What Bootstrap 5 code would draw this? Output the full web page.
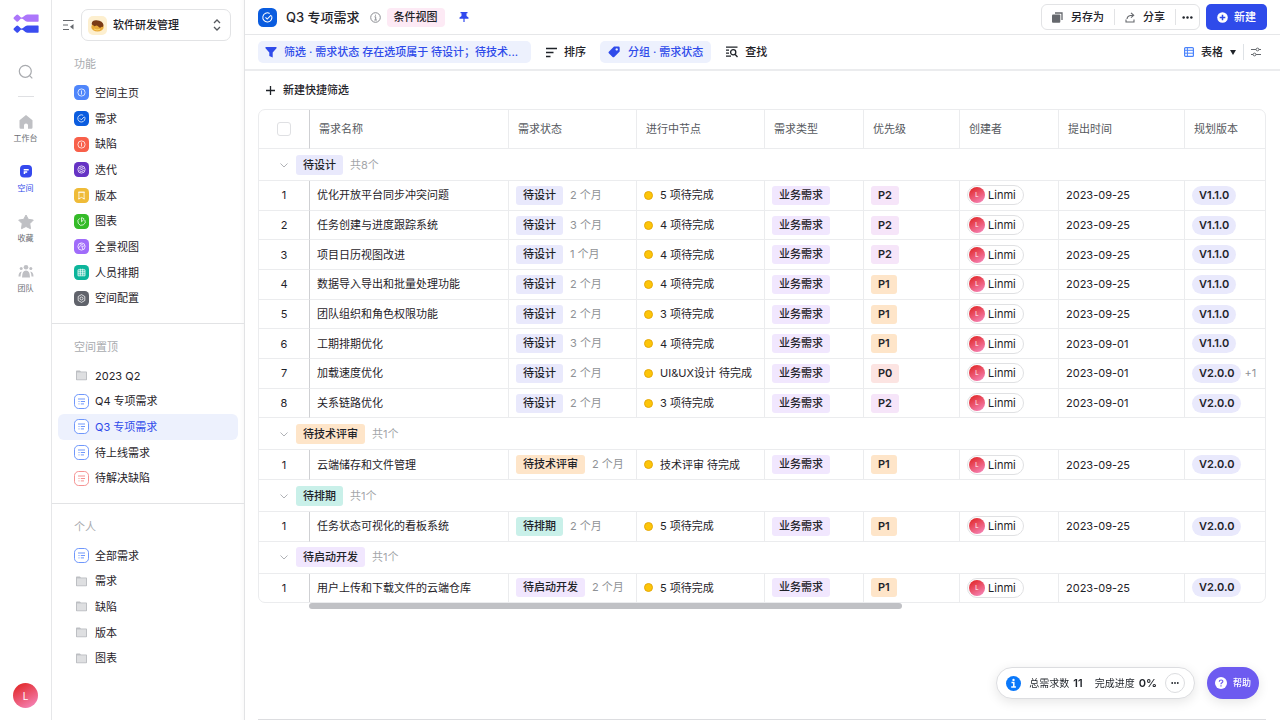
<!DOCTYPE html>
<html lang="zh-CN">
<head>
<meta charset="utf-8">
<meta name="viewport" content="width=device-width, initial-scale=1">
<title>Q3 专项需求</title>
<link href="https://cdn.jsdelivr.net/npm/bootstrap@5.3.0/dist/css/bootstrap.min.css" rel="stylesheet">
<style>
  :root { --ink:#1f2329; --muted:#8f9296; --line:#ebecee; --brand:#2f4bea; --brand-soft:#edf1fd; }
  body { font-family:Inter,"Noto Sans CJK SC",sans-serif; font-size:11px; line-height:16px; color:var(--ink); background:#fff; }
  a { text-decoration:none; color:inherit; }
  svg { display:block; flex:none; }
  button, select { font:inherit; color:inherit; background:none; border:0; padding:0; }
  select { appearance:none; outline:0; font-weight:500; }

  .rail { width:52px; border-right:1px solid #e6e7e9; padding:14px 0 12px; }
  .rail a { font-size:8px; line-height:12px; color:#6b6e73; height:50px; gap:2px; }
  .rail a.on { color:var(--brand); }
  .rail hr { width:16px; margin:16px 0 17px; border-color:#dfe0e3; opacity:1; }
  .rail-search { margin-top:30px; }
  .face { border-radius:50%; color:#fff; background:linear-gradient(150deg,#e32f34 15%,#f582b4 90%); display:flex; align-items:center; justify-content:center; flex:none; }
  .face-lg { width:25px; height:25px; font-size:10px; }
  .face-sm { width:16px; height:16px; font-size:6px; }

  .side { width:193px; border-right:1px solid #e2e3e5; box-shadow:inset -4px 0 5px -4px #0000000d; }
  .side-top { padding:9px 13px 0 10px; gap:6px; }
  .space-pick { height:32px; border:1px solid #e2e3e5; border-radius:7px; padding:0 9px 0 6px; gap:6px; }
  .side-part { padding:15px 6px 12px; border-bottom:1px solid #e2e3e5; }
  .side-part:last-child { border:0; }
  .side-part h2 { font-size:11px; line-height:16px; font-weight:400; color:#a9abaf; margin:0 0 8px; padding-left:16px; }
  .side-list a { flex:1 1 0; display:flex; align-items:center; gap:6px; padding-left:16px; border-radius:6px; }
  .side-list a.on { background:var(--brand-soft); color:var(--brand); }
  .list-nine { height:231px; }
  .list-five { height:128px; }

  .topbar { height:35px; border-bottom:1px solid #e6e7e9; padding:0 13px; }
  .topbar h1 { font-size:13px; line-height:20px; font-weight:500; margin:0 10px 0 9px; }
  .kind { background:#fdeaf5; border-radius:4px; padding:1px 7px 2px; font-weight:500; margin:0 14px 0 6px; }
  .acts { height:26px; border:1px solid #e2e3e5; border-radius:6px; font-weight:500; margin-right:6px; }
  .acts button { padding:0 10px; }
  .acts button:last-child { padding:0 6px; }
  .acts button + button { border-left:1px solid #e2e3e5; height:16px; }
  .btn-new { height:26px; border-radius:5px; background:var(--brand); color:#fff; font-weight:500; padding:0 11px; gap:6px; }
  .tools { height:36px; border-bottom:2px solid #ebecee; padding:0 13px; font-weight:500; }
  .tools button { gap:7px; }
  .tool-plain { margin:0 14px 0 15px; }
  .chip { height:22px; border-radius:5px; background:var(--brand-soft); color:var(--brand); padding:0 7px; }
  .tools .chip-group { gap:8px; padding:0 8px; }
  .chip-wide { width:273px; }
  .view-pick { gap:7px; padding-right:7px; }
  .view-set { padding:0 6px 0 7px; }

  .board { margin:0 14px 0 13px; }
  .quick { height:38px; padding:0 8px; font-weight:500; }
  .frame { border:1px solid var(--line); border-radius:7px; overflow:hidden; }
  .grid-table { width:100%; height:492px; table-layout:fixed; border-collapse:separate; border-spacing:0; }
  .grid-table th, .grid-table td { padding:0 7px; border-bottom:1px solid var(--line); border-left:1px solid var(--line); white-space:nowrap; vertical-align:middle; }
  .grid-table th { font-weight:400; color:#56595e; padding-left:9px; height:39px; }
  .grid-table tr > :first-child { border-left:0; text-align:center; padding:0; }
  .grid-table tr > :nth-child(2) { border-left-color:#cfd0d3; }
  .grid-table tr.group-row > td { height:32px; text-align:left; padding-left:20px; }
  .group-row .tag-line { gap:7px; }
  .grid-table tbody tr:last-child td { border-bottom:0; }
  .grid-table input { appearance:none; width:14px; height:14px; border:1px solid #dfe0e3; border-radius:3px; margin:0; display:block; }
  .tag { display:inline-block; border-radius:3px; padding:1px 7px 2px; font-weight:500; line-height:16px; }
  .group-row .tag { padding:2px 7px; }
  .tag-design { background:#e9e9fc; } .tag-review { background:#fee5c9; } .tag-plan { background:#c9f0e9; }
  .tag-type, .tag-start { background:#f1e7fe; }
  .tag-P2 { background:#f6e5f9; } .tag-P1 { background:#fee5c9; } .tag-P0 { background:#fce4e2; }
  .tag-level { font-weight:600; }
  .tag-ver { background:#e9e9fc; border-radius:10px; font-weight:600; }
  .age { color:var(--muted); margin-left:7px; }
  .plus { color:var(--muted); margin-left:3px; }
  .count { color:#a4a6aa; }
  .node { gap:7px; }
  .dot { width:9px; height:9px; border-radius:50%; background:#fdc508; border:1px solid #e5a90b; flex:none; }
  .person { display:inline-flex; align-items:center; gap:3px; height:20px; border:1px solid #e0e1e3; border-radius:10px; padding:0 7px 0 1px; }
  .hbar { margin-left:51px; }
  .hbar div { width:62%; height:6px; border-radius:3px; background:#c0c1c5; }

  .float-bar { position:fixed; right:21px; bottom:21px; gap:12px; }
  .stats { height:32px; border:1px solid #dcdde0; border-radius:16px; background:#fff; box-shadow:0 3px 12px #0000001a; padding:0 9px; font-size:10px; }
  .stats b { font-size:11px; font-weight:600; }
  .more { width:20px; height:20px; border:1px solid #dcdde0; border-radius:50%; }
  .help { height:32px; border-radius:16px; background:#6d5bf0; color:#fff; font-size:9px; font-weight:500; padding:0 8px; gap:6px; box-shadow:0 3px 12px #0000001a; }
  .foot-line { margin:0 14px 0 13px; border-top:1px solid #dcdde0; }
</style>
</head>
<body>
<svg width="0" height="0" class="position-absolute" aria-hidden="true">
  <symbol id="box" viewBox="0 0 15 15"><rect width="15" height="15" rx="4.2" fill="currentColor"/></symbol>
  <symbol id="folder" viewBox="0 0 15 15"><path d="M2 3.300q0-.8.800-.8h3l1.200.9h5.200q.8 0 .8.800v7.300q0 .8-.8.800H2.800q-.8 0-.8-.8z" fill="#bdbfc3"/><path d="M3 4.400h9v7H3z" fill="#dedfe1"/></symbol>
  <symbol id="view" viewBox="0 0 15 15"><rect x=".5" y=".5" width="14" height="14" rx="4.200" fill="#fff" stroke="currentColor"/><path d="M4 5h7M6.800 7.500H11M6.800 9.900H10M4.500 7.500h1M4.500 9.900h1" stroke="currentColor" fill="none"/></symbol>
  <symbol id="dots" viewBox="0 0 12 12"><g fill="currentColor"><circle cx="1.800" cy="6" r="1.350"/><circle cx="6" cy="6" r="1.350"/><circle cx="10.200" cy="6" r="1.350"/></g></symbol>
  <symbol id="chev" viewBox="0 0 10 10"><path d="M1.500 3.500L5 7l3.500-3.500" fill="none" stroke="#b0b2b6"/></symbol>
  <symbol id="g-info" viewBox="0 0 15 15"><circle cx="7.500" cy="7.500" r="3.600"/><path d="M7.500 5.500v4"/></symbol>
  <symbol id="g-check" viewBox="0 0 15 15"><path d="M10.700 6a3.600 3.600 0 1 1-1.500-1.700M5.900 7.400l1.400 1.400 3-3.100"/></symbol>
  <symbol id="g-spin" viewBox="0 0 15 15"><circle cx="7.500" cy="7.500" r="3.600"/><path d="M5.500 7.300q0-1.600 2-1.600t2 1.300M9.500 7.900q0 1.500-2 1.500T5.500 8.300M6.500 7.500h2"/></symbol>
  <symbol id="g-book" viewBox="0 0 15 15"><path d="M4.900 4.200h5.200v6.600L7.500 9.400l-2.600 1.400zM4 4.200h7M4 10.800h1.500M9.500 10.800H11"/></symbol>
  <symbol id="g-pie" viewBox="0 0 15 15"><path d="M5.900 4.300A3.700 3.700 0 1 0 10.900 6M7.500 7.800V3.700a3.600 3.600 0 0 1 2.700 1.500z"/></symbol>
  <symbol id="g-pan" viewBox="0 0 15 15"><circle cx="7.500" cy="7.500" r="3.600"/><path d="M4.500 9l2.200-2.700 1.400 1.400 2.600-1M6 4.500l3 1.500M8 8l1 2.500"/></symbol>
  <symbol id="g-cal" viewBox="0 0 15 15"><path d="M4 4.800h7v6H4zM4 6.800h7M4 8.800h7M6.300 3.700v7M8.700 3.700v7"/></symbol>
  <symbol id="g-gear" viewBox="0 0 15 15"><path d="M7.500 3.600l3.300 1.900v4l-3.300 1.900-3.300-1.900v-4z"/><circle cx="7.500" cy="7.500" r="1.500"/></symbol>
</svg>

<div class="d-flex vh-100 overflow-hidden">
  <nav class="rail d-flex flex-column align-items-center flex-shrink-0" aria-label="主导航">
    <svg width="26" height="20" viewBox="0 0 26 20"><g fill="#ac76fb"><path d="M3.300 1Q4.300 0 5.300 1L8 3.600v1L5.300 7.200q-1 1-2 0L.9 5q-.9-.9 0-1.800zM7 3.500h3v1.200H7z"/><path d="M12.300 1.300Q13.300.5 14.500.5H25q.6 0 .6.600v6q0 .6-.6.600H14.500q-1.200 0-2.200-.8L9.300 4.600v-1z"/></g><g fill="#3b4df0"><path d="M3.300 12Q4.300 11 5.300 12L8 14.600v1l-2.700 2.600q-1 1-2 0L.9 16q-.9-.9 0-1.800zM7 14.500h3v1.200H7z"/><path d="M12.300 12.300q1-.8 2.200-.8H25q.6 0 .6.600v6q0 .6-.6.600H14.500q-1.200 0-2.200-.8l-3-2.300v-1z"/></g></svg>
    <button class="rail-search" aria-label="搜索"><svg width="16" height="16" viewBox="0 0 16 16" fill="none" stroke="#a9abaf" stroke-width="1.200"><circle cx="7.300" cy="7.300" r="6"/><path d="M11.600 11.600l2.700 2.700"/></svg></button>
    <hr>
    <a href="#" class="d-flex flex-column align-items-center"><svg width="16" height="16" viewBox="0 0 16 16"><path d="M8 1l6.500 5.200v7.300q0 1.200-1.200 1.200H10v-3.500q0-1.700-2-1.700t-2 1.700v3.500H2.700q-1.200 0-1.200-1.200V6.200z" fill="#bfc0c4"/></svg>工作台</a>
    <a href="#" class="on d-flex flex-column align-items-center"><svg width="16" height="16" viewBox="0 0 16 16"><rect x="2" y="1" width="12" height="12.500" rx="4" fill="#3549ee"/><path d="M5.700 5h5v1.500h-5zM5.700 7.200h3.500v1.500H7.200V10H5.700z" fill="#fff"/></svg>空间</a>
    <a href="#" class="d-flex flex-column align-items-center"><svg width="16" height="16" viewBox="0 0 16 16"><path d="M8 1l2.300 4.300 5 .8-3.500 3.600.7 5L8 12.500l-4.500 2.200.7-5L.7 6.100l5-.8z" fill="#bfc0c4" stroke="#bfc0c4" stroke-linejoin="round"/></svg>收藏</a>
    <a href="#" class="d-flex flex-column align-items-center"><svg width="16" height="16" viewBox="0 0 16 16" fill="#bfc0c4"><circle cx="8" cy="3.200" r="2.300"/><circle cx="3.200" cy="4.500" r="1.500"/><circle cx="12.800" cy="4.500" r="1.500"/><path d="M4 13.500q0-7 4-7t4 7zM.5 12.500Q.5 8 3.700 7.500 2.500 10 2.500 12.500zM15.500 12.500q0-4.500-3.200-5 1.200 2.500 1.200 5z"/></svg>团队</a>
    <div class="face face-lg mt-auto">L</div>
  </nav>

  <aside class="side flex-shrink-0">
    <div class="side-top d-flex align-items-center">
      <button aria-label="收起侧栏"><svg width="13" height="12" viewBox="0 0 13 12"><path d="M1 1.500h10.500M1 6h5M1 10.500h6" stroke="#65686d" stroke-width="1.100"/><path d="M11.500 5v5.500L8 7.700z" fill="#65686d"/></svg></button>
      <label class="space-pick d-flex align-items-center flex-fill">
        <svg width="19" height="19" viewBox="0 0 19 19"><rect width="19" height="19" rx="5" fill="#fdefcf"/><ellipse cx="9.500" cy="11" rx="6.200" ry="4.500" fill="#e9ab3a"/><path d="M3.700 7.500q.6-3.500 4.800-3.200 6.500.7 7 4.700-.3 2.700-2 1.700-1.300 2-2.700.4-1.500-2.400-3-1.300Q5.500 11 5.300 9 3.400 9 3.700 7.500z" fill="#7a3b16"/><path d="M6 13q3 1.700 6 .3" stroke="#fbd46b" fill="none"/></svg>
        <select class="flex-fill" aria-label="空间"><option>软件研发管理</option></select>
        <svg width="8" height="12" viewBox="0 0 8 12" fill="none" stroke="#55585d" stroke-width="1.300"><path d="M1 4l3-3 3 3M1 8l3 3 3-3"/></svg>
      </label>
    </div>
    <div class="side-part"><h2>功能</h2><div class="side-list list-nine d-flex flex-column" data-list="fn"></div></div>
    <div class="side-part"><h2>空间置顶</h2><div class="side-list list-five d-flex flex-column" data-list="pin"></div></div>
    <div class="side-part"><h2>个人</h2><div class="side-list list-five d-flex flex-column" data-list="me"></div></div>
  </aside>

  <main class="flex-fill d-flex flex-column overflow-hidden">
    <header class="topbar d-flex align-items-center flex-shrink-0">
      <svg width="19" height="19" viewBox="0 0 15 15" color="#0a5cdf"><use href="#box"/><g fill="none" stroke="#fff" stroke-width=".8"><use href="#g-check"/></g></svg>
      <h1>Q3 专项需求</h1>
      <svg width="11" height="11" viewBox="0 0 11 11" fill="none" stroke="#8b8d92"><circle cx="5.500" cy="5.500" r="4.800"/><path d="M4.500 4.800h1.200v3M4.300 8h2.600M5.500 2.700v1"/></svg>
      <span class="kind">条件视图</span>
      <svg width="10" height="12" viewBox="0 0 10 12"><path d="M1.500 1h7v1.200h-1V5L9.500 6.500v1.200h-9V6.500l2-1.500V2.200h-1z" fill="#3049ee"/><path d="M5 7v4" stroke="#3049ee" stroke-width="1.200"/></svg>
      <div class="acts d-flex align-items-center ms-auto">
        <button class="d-flex align-items-center gap-2"><svg width="11" height="11" viewBox="0 0 11 11"><path d="M3 1h7v7" fill="none" stroke="#65686d" stroke-width="1.300"/><rect y="2.500" width="8.300" height="8.300" rx="1" fill="#65686d"/></svg>另存为</button>
        <button class="d-flex align-items-center gap-2"><svg width="10" height="11" viewBox="0 0 10 11" fill="none" stroke="#65686d" stroke-width="1.100"><path d="M1 7.500V10h8V7.500M2 7q.3-3.700 6-3.700M6 .8l2.700 2.500L6 5.700"/></svg>分享</button>
        <button class="d-flex align-items-center" aria-label="更多"><svg width="11" height="11"><use href="#dots"/></svg></button>
      </div>
      <button class="btn-new d-flex align-items-center"><svg width="11" height="11" viewBox="0 0 11 11"><circle cx="5.500" cy="5.500" r="5.300" fill="#fff"/><path d="M5.500 2.700v5.600M2.700 5.500h5.600" stroke="#2f4bea" stroke-width="1.500"/></svg>新建</button>
    </header>

    <div class="tools d-flex align-items-center flex-shrink-0">
      <button class="chip chip-wide d-flex align-items-center text-nowrap"><svg width="12" height="12" viewBox="0 0 12 12"><path d="M.5 1h11v1.300L7.700 6.500v5L4.300 10V6.500L.5 2.300z" fill="currentColor"/></svg>筛选 · 需求状态 存在选项属于 待设计；待技术...</button>
      <button class="tool-plain d-flex align-items-center"><svg width="11" height="11" viewBox="0 0 11 11"><path d="M0 1.500h11M0 5.500h7.500M0 9.500h4.500" stroke="currentColor" stroke-width="1.400"/></svg>排序</button>
      <button class="chip chip-group d-flex align-items-center"><svg width="12" height="12" viewBox="0 0 12 12"><path fill-rule="evenodd" d="M6 .5h4.500q1.200 0 1.200 1.200v3.800L6.200 11q-.8.700-1.600 0L.8 7.200q-.7-.7 0-1.500zM8.700 2.200a1.200 1.200 0 1 0 .01 0z" fill="currentColor"/></svg>分组 · 需求状态</button>
      <button class="tool-plain d-flex align-items-center"><svg width="12" height="12" viewBox="0 0 12 12" fill="none" stroke="currentColor" stroke-width="1.300"><path d="M0 1.200h11.500M0 4.200h3M0 7.200h3M0 10.200h5M9.200 8.500l2.300 2.500"/><circle cx="7.200" cy="6.200" r="2.600"/></svg>查找</button>
      <label class="view-pick d-flex align-items-center ms-auto border-end"><svg width="10" height="10" viewBox="0 0 10 10"><rect x=".6" y=".6" width="8.800" height="8.800" rx="1" fill="#fff" stroke="#4a83fb" stroke-width="1.200"/><path d="M1 3.300h8M1 6.200h8M3.400 1v8" stroke="#4a83fb"/></svg><select aria-label="视图类型"><option>表格</option></select><svg width="6" height="5" viewBox="0 0 6 5"><path d="M0 0h6L3 5z" fill="#1f2329"/></svg></label>
      <button class="view-set" aria-label="显示设置"><svg width="10" height="10" viewBox="0 0 10 10" fill="none" stroke="#65686d"><path d="M0 2.500h5M8 2.500h2M0 7.500h2M5 7.500h5"/><circle cx="6.500" cy="2.500" r="1.400"/><circle cx="3.500" cy="7.500" r="1.400"/></svg></button>
    </div>

    <div class="board">
      <button class="quick d-flex align-items-center gap-2"><svg width="9" height="9" viewBox="0 0 9 9"><path d="M4.500 0v9M0 4.500h9" stroke="currentColor" stroke-width="1.300"/></svg>新建快捷筛选</button>
      <div class="frame">
        <table class="grid-table">
          <colgroup><col style="width:50px"><col style="width:199px"><col style="width:128px"><col style="width:128px"><col style="width:99px"><col style="width:96px"><col style="width:99px"><col style="width:126px"><col></colgroup>
          <thead><tr><th><input type="checkbox" class="mx-auto" aria-label="全选"></th><th>需求名称</th><th>需求状态</th><th>进行中节点</th><th>需求类型</th><th>优先级</th><th>创建者</th><th>提出时间</th><th>规划版本</th></tr></thead>
          <tbody></tbody>
        </table>
      </div>
      <div class="hbar"><div></div></div>
    </div>
    <div class="foot-line mt-auto"></div>
  </main>
</div>

<div class="float-bar d-flex align-items-center">
  <div class="stats d-flex align-items-center">
    <svg width="15" height="15" viewBox="0 0 15 15"><circle cx="7.500" cy="7.500" r="7.500" fill="#0a78fa"/><circle cx="7.500" cy="3.900" r="1.200" fill="#fff"/><path d="M5.500 6.500h2.300v4M5.200 11h4.700" stroke="#fff" stroke-width="1.500" fill="none"/></svg>
    <span class="ms-2">总需求数</span><b class="ms-1">11</b><span class="ms-2 ps-1">完成进度</span><b class="ms-1 me-2">0%</b>
    <button class="more d-flex align-items-center justify-content-center" aria-label="更多统计"><svg width="8" height="8"><use href="#dots"/></svg></button>
  </div>
  <button class="help d-flex align-items-center"><svg width="12" height="12" viewBox="0 0 12 12"><circle cx="6" cy="6" r="6" fill="#fff"/><path d="M4.300 4.800q0-1.800 1.800-1.800t1.700 1.500q0 .8-.9 1.300T6 7.200M6 8.200v1.200" stroke="#6d5bf0" stroke-width="1.200" fill="none"/></svg>帮助</button>
</div>

<script src="https://cdn.jsdelivr.net/npm/bootstrap@5.3.0/dist/js/bootstrap.bundle.min.js"></script>
<script>
  const solid = (color, glyph) => `<svg width="15" height="15" viewBox="0 0 15 15" color="${color}"><use href="#box"/><g fill="none" stroke="#fff" stroke-opacity=".85" stroke-width=".9"><use href="#${glyph}"/></g></svg>`;
  const plain = (id, color) => `<svg width="15" height="15" color="${color}"><use href="#${id}"/></svg>`;
  const folder = plain('folder', '#b9bbbf'), view = plain('view', '#6f97fb');
  const lists = {
    fn: [['空间主页', solid('#4f86fb', 'g-info')], ['需求', solid('#0a5cdf', 'g-check')], ['缺陷', solid('#f8604a', 'g-info')], ['迭代', solid('#6633c4', 'g-spin')], ['版本', solid('#efbb38', 'g-book')], ['图表', solid('#35bb29', 'g-pie')], ['全景视图', solid('#a06cfa', 'g-pan')], ['人员排期', solid('#0cb59b', 'g-cal')], ['空间配置', solid('#60636b', 'g-gear')]],
    pin: [['2023 Q2', folder], ['Q4 专项需求', view], ['Q3 专项需求', view, 'on'], ['待上线需求', view], ['待解决缺陷', plain('view', '#f59393')]],
    me: [['全部需求', view], ['需求', folder], ['缺陷', folder], ['版本', folder], ['图表', folder]]
  };
  for (const [key, items] of Object.entries(lists))
    document.querySelector(`[data-list=${key}]`).innerHTML = items.map(([text, icon, on]) => `<a href="#" class="${on || ''}">${icon}${text}</a>`).join('');

  const groups = [
    ['待设计', 'design', [
      ['优化开放平台同步冲突问题', 2, '5 项待完成', 'P2', '2023-09-25', 'V1.1.0'],
      ['任务创建与进度跟踪系统', 3, '4 项待完成', 'P2', '2023-09-25', 'V1.1.0'],
      ['项目日历视图改进', 1, '4 项待完成', 'P2', '2023-09-25', 'V1.1.0'],
      ['数据导入导出和批量处理功能', 2, '4 项待完成', 'P1', '2023-09-25', 'V1.1.0'],
      ['团队组织和角色权限功能', 2, '3 项待完成', 'P1', '2023-09-25', 'V1.1.0'],
      ['工期排期优化', 3, '4 项待完成', 'P1', '2023-09-01', 'V1.1.0'],
      ['加载速度优化', 2, 'UI&amp;UX设计 待完成', 'P0', '2023-09-01', 'V2.0.0', '+1'],
      ['关系链路优化', 2, '3 项待完成', 'P2', '2023-09-01', 'V2.0.0']]],
    ['待技术评审', 'review', [['云端储存和文件管理', 2, '技术评审 待完成', 'P1', '2023-09-25', 'V2.0.0']]],
    ['待排期', 'plan', [['任务状态可视化的看板系统', 2, '5 项待完成', 'P1', '2023-09-25', 'V2.0.0']]],
    ['待启动开发', 'start', [['用户上传和下载文件的云端仓库', 2, '5 项待完成', 'P1', '2023-09-25', 'V2.0.0']]]
  ];
  document.querySelector('.grid-table tbody').innerHTML = groups.map(([state, kind, rows]) =>
    `<tr class="group-row"><td colspan="9"><div class="tag-line d-flex align-items-center"><svg width="10" height="10"><use href="#chev"/></svg><span class="tag tag-${kind}">${state}</span><span class="count">共${rows.length}个</span></div></td></tr>` +
    rows.map(([name, age, node, level, date, version, extra], i) =>
      `<tr><td>${i + 1}</td><td>${name}</td><td><span class="tag tag-${kind}">${state}</span><span class="age">${age} 个月</span></td>
       <td><div class="node d-flex align-items-center"><i class="dot"></i>${node}</div></td><td><span class="tag tag-type">业务需求</span></td><td><span class="tag tag-level tag-${level}">${level}</span></td>
       <td><span class="person"><span class="face face-sm">L</span>Linmi</span></td><td>${date}</td><td><span class="tag tag-ver">${version}</span>${extra ? `<span class="plus">${extra}</span>` : ''}</td></tr>`).join('')).join('');
</script>
</body>
</html>
